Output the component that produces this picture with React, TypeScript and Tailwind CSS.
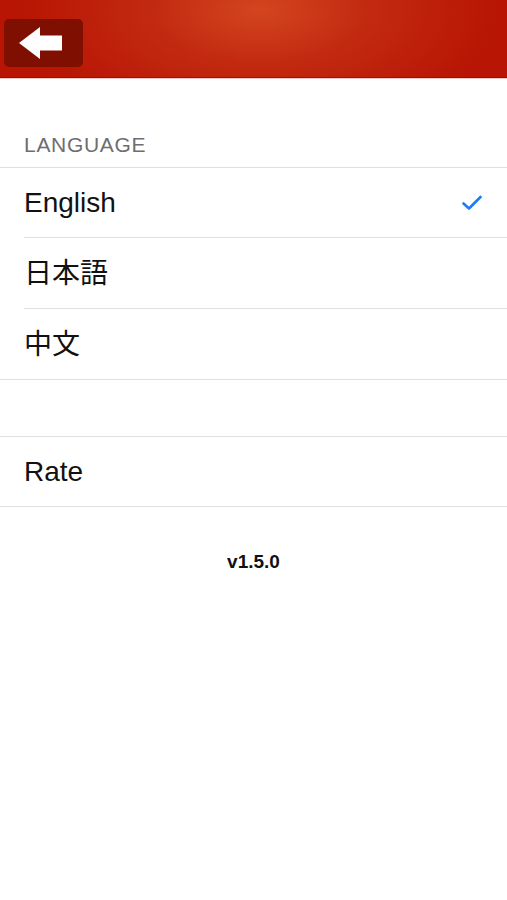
import React from "react";

function Row({ children, inset, right, h }: { children: React.ReactNode; inset?: boolean; right?: React.ReactNode; h: string }) {
  return (
    <div className={`relative flex ${h} items-center justify-between pl-6 pr-6`}>
      <span className="text-[28px] leading-none text-[#111]">{children}</span>
      {right}
      <div className={`absolute bottom-0 right-0 h-px bg-[#e0e0e0] ${inset ? "left-6" : "left-0"}`} />
    </div>
  );
}

export default function App() {
  return (
    <div
      className="flex h-[900px] w-[507px] flex-col bg-white"
      style={{ fontFamily: '"Liberation Sans", "Noto Sans CJK JP", sans-serif' }}
    >
      <div className="relative h-[78px] w-full bg-[radial-gradient(ellipse_240px_120px_at_260px_10px,#d4451f_0%,#c22a10_45%,#b81504_100%)] border-b border-[#a01000]">
        <div className="pt-[19px] pl-1">
          <div className="flex h-[48px] w-[79px] items-center rounded-[5px] bg-[#7f0f00] pl-[15px]">
            <svg width="44" height="32" viewBox="0 0 44 32">
              <path d="M0 16 L21 0 L21 8.5 L43 8.5 L43 23.5 L21 23.5 L21 32 Z" fill="#fff" />
            </svg>
          </div>
        </div>
      </div>
      <div className="h-px bg-[#f4c9c4]" />
      <div className="flex h-[88px] items-end pb-[12px] pl-6">
        <span className="text-[21px] leading-none tracking-[0.7px] text-[#6d6d72]">LANGUAGE</span>
      </div>
      <div className="h-px bg-[#e0e0e0]" />
      <Row
        inset
        h="h-[70px]"
        right={
          <svg width="20" height="16" viewBox="0 0 20 16" className="mr-[1px]">
            <path d="M1.5 8.5 L7 13.5 L18.5 2" fill="none" stroke="#1a7cf6" strokeWidth="2.6" strokeLinecap="round" strokeLinejoin="round" />
          </svg>
        }
      >
        English
      </Row>
      <Row inset h="h-[71px]">日本語</Row>
      <Row h="h-[71px]">中文</Row>
      <div className="h-[56px]" />
      <div className="h-px bg-[#e0e0e0]" />
      <Row h="h-[70px]">Rate</Row>
      <div className="flex justify-center pt-[45px]">
        <span className="text-[19px] leading-none font-bold text-[#111]">v1.5.0</span>
      </div>
    </div>
  );
}
